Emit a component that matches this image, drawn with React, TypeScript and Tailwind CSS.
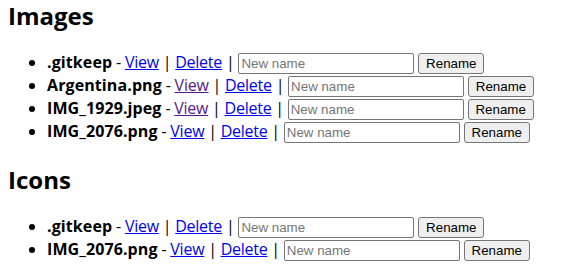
import { useState } from 'react'

type FileRow = {
	name: string
	visited?: boolean
}

const sections: { title: string; files: FileRow[] }[] = [
	{
		title: 'Images',
		files: [
			{ name: '.gitkeep' },
			{ name: 'Argentina.png', visited: true },
			{ name: 'IMG_1929.jpeg', visited: true },
			{ name: 'IMG_2076.png' },
		],
	},
	{
		title: 'Icons',
		files: [{ name: '.gitkeep' }, { name: 'IMG_2076.png' }],
	},
]

const FileItem = ({ file }: { file: FileRow }) => {
	const [newName, setNewName] = useState('')

	return (
		<li className="h-[23px] leading-[23px] whitespace-nowrap tracking-[-0.25px]">
			<b className="tracking-[0.1px]">{file.name}</b> -{' '}
			<a href="#" className={file.visited ? 'underline text-[#551a8b]' : 'underline text-[#0000ee]'}>
				View
			</a>{' '}
			|{' '}
			<a href="#" className="underline text-[#0000ee]">
				Delete
			</a>{' '}
			|{' '}
			<input
				type="text"
				placeholder="New name"
				value={newName}
				onChange={(e) => setNewName(e.target.value)}
				className="align-middle h-[21px] w-[176px] px-[2px] border border-[#767676] rounded-[2px] bg-white tracking-normal text-[13.33px] font-['Arial','Liberation_Sans',sans-serif] placeholder:text-[#757575]"
			/>{' '}
			<button className="align-middle h-[21px] w-[66px] border border-[#767676] rounded-[3px] bg-[#efefef] tracking-normal text-[13.33px] leading-none text-black font-['Arial','Liberation_Sans',sans-serif]">
				Rename
			</button>
		</li>
	)
}

export default function App() {
	return (
		<div className="px-2 bg-white text-black text-[16px] font-['Open_Sans','Noto_Sans',sans-serif]">
			{sections.map((section) => (
				<section key={section.title}>
					{/* HEADING */}
					<h2 className="text-[24px] font-bold leading-[31px] mb-5">{section.title}</h2>

					{/* FILE LIST */}
					<ul className="list-disc pl-[39px] mb-[21px]">
						{section.files.map((file) => (
							<FileItem key={file.name} file={file} />
						))}
					</ul>
				</section>
			))}
		</div>
	)
}
